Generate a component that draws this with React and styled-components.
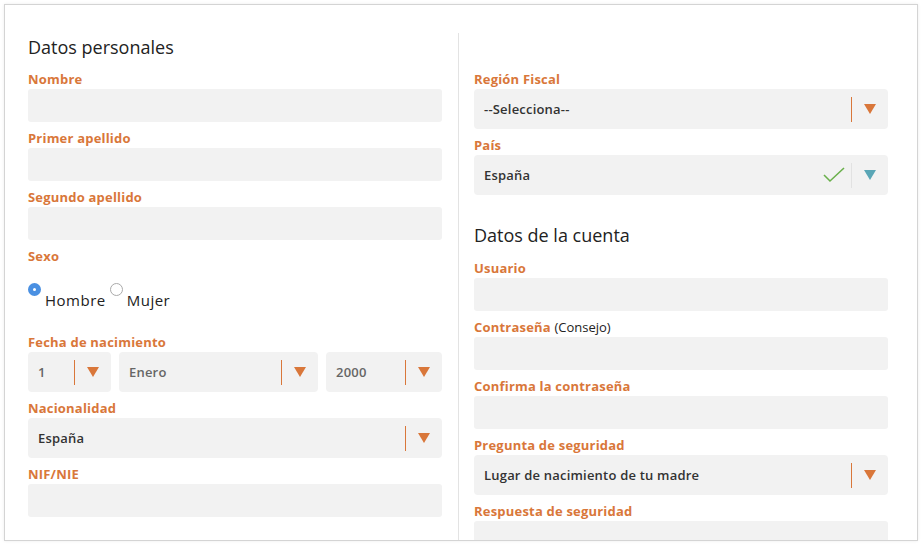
import styled, { createGlobalStyle } from 'styled-components';

const Global = createGlobalStyle`
  body { margin: 0; background: #fff; font-family: "Open Sans", "Liberation Sans", sans-serif; }
`;

const Page = styled.div`
  padding: 4px;
`;

const Frame = styled.div`
  height: 535px;
  border: 1px solid #d4d4d4;
  box-shadow: 0 0 3px rgba(0,0,0,.08);
  overflow: hidden;
  padding: 0 30px 0 23px;
`;

const Columns = styled.div`
  display: grid;
  grid-template-columns: 431px 429px;
  margin-top: 28px;
`;

const Column = styled.div`
  padding: ${p => (p.$right ? '30px 0 0 15px' : '2px 16px 0 0')};
  border-right: ${p => (p.$right ? 'none' : '1px solid #e3e3e3')};
  min-height: 560px;
`;

const Title = styled.h2`
  margin: ${p => (p.$spaced ? '28px 0 5px' : '0 0 4px')};
  font-size: 18px;
  line-height: 24px;
  font-weight: 400;
  color: #222;
`;

const Field = styled.div`
  padding-top: 7px;
`;

const Label = styled.div`
  font-size: 13px;
  line-height: 18px;
  font-weight: 700;
  color: #d9773a;
  letter-spacing: .2px;
  margin-bottom: 1px;
  span { font-weight: 400; color: #222; letter-spacing: 0; }
`;

const Input = styled.div`
  height: 33px;
  background: #f2f2f2;
  border-radius: 3px;
`;

const Select = styled.div`
  height: 40px;
  background: #f2f2f2;
  border-radius: 4px;
  display: flex;
  align-items: center;
  padding-left: 10px;
  font-size: 13px;
  font-weight: 600;
  letter-spacing: .2px;
  color: ${p => (p.$muted ? '#666' : '#333')};
`;

const Value = styled.div`
  flex: 1;
`;

const Check = styled.svg`
  width: 22px;
  height: 16px;
  margin-right: 6px;
`;

const Sep = styled.div`
  width: 1px;
  height: 25px;
  background: ${p => p.$color};
`;

const Arrow = styled.div`
  width: 36px;
  display: flex;
  justify-content: center;
  &::after {
    content: '';
    border-left: 6px solid transparent;
    border-right: 6px solid transparent;
    border-top: 10px solid ${p => p.$color};
  }
`;

const SelectBox = ({ value, muted, ok }) => (
  <Select $muted={muted}>
    <Value>{value}</Value>
    {ok && (
      <Check viewBox="0 0 22 16">
        <path d="M1 8l6 6L21 1" fill="none" stroke="#6ab04c" strokeWidth="1.6" />
      </Check>
    )}
    <Sep $color={ok ? '#e2e2e2' : '#d9773a'} />
    <Arrow $color={ok ? '#5aa6b6' : '#d9773a'} />
  </Select>
);

const Radios = styled.div`
  display: flex;
  padding: 24px 0 16px;
  font-size: 15px;
  color: #222;
  letter-spacing: .5px;
`;

const Radio = styled.label`
  display: flex;
  align-items: flex-start;
  gap: 4px;
  line-height: 20px;
  &::before {
    content: '';
    width: 13px;
    height: 13px;
    border-radius: 50%;
    box-sizing: border-box;
    margin-top: -7px;
    background: #fff;
    border: ${p => (p.$on ? '5px solid #4a90e2' : '1px solid #aaa')};
  }
  & + & { margin-left: 4px; }
`;

const DateRow = styled.div`
  display: grid;
  grid-template-columns: 83px 1fr 116px;
  gap: 8px;
`;

export default function App() {
  return (
    <Page>
      <Global />
      <Frame>
        <Columns>
          <Column>
            <Title>Datos personales</Title>
            <Field><Label>Nombre</Label><Input /></Field>
            <Field><Label>Primer apellido</Label><Input /></Field>
            <Field><Label>Segundo apellido</Label><Input /></Field>
            <Field>
              <Label>Sexo</Label>
              <Radios>
                <Radio $on>Hombre</Radio>
                <Radio>Mujer</Radio>
              </Radios>
            </Field>
            <Field>
              <Label>Fecha de nacimiento</Label>
              <DateRow>
                <SelectBox value="1" muted />
                <SelectBox value="Enero" muted />
                <SelectBox value="2000" muted />
              </DateRow>
            </Field>
            <Field><Label>Nacionalidad</Label><SelectBox value="España" /></Field>
            <Field><Label>NIF/NIE</Label><Input /></Field>
          </Column>
          <Column $right>
            <Field><Label>Región Fiscal</Label><SelectBox value="--Selecciona--" /></Field>
            <Field><Label>País</Label><SelectBox value="España" ok /></Field>
            <Title $spaced>Datos de la cuenta</Title>
            <Field><Label>Usuario</Label><Input /></Field>
            <Field><Label>Contraseña <span>(Consejo)</span></Label><Input /></Field>
            <Field><Label>Confirma la contraseña</Label><Input /></Field>
            <Field><Label>Pregunta de seguridad</Label><SelectBox value="Lugar de nacimiento de tu madre" /></Field>
            <Field><Label>Respuesta de seguridad</Label><Input /></Field>
          </Column>
        </Columns>
      </Frame>
    </Page>
  );
}
